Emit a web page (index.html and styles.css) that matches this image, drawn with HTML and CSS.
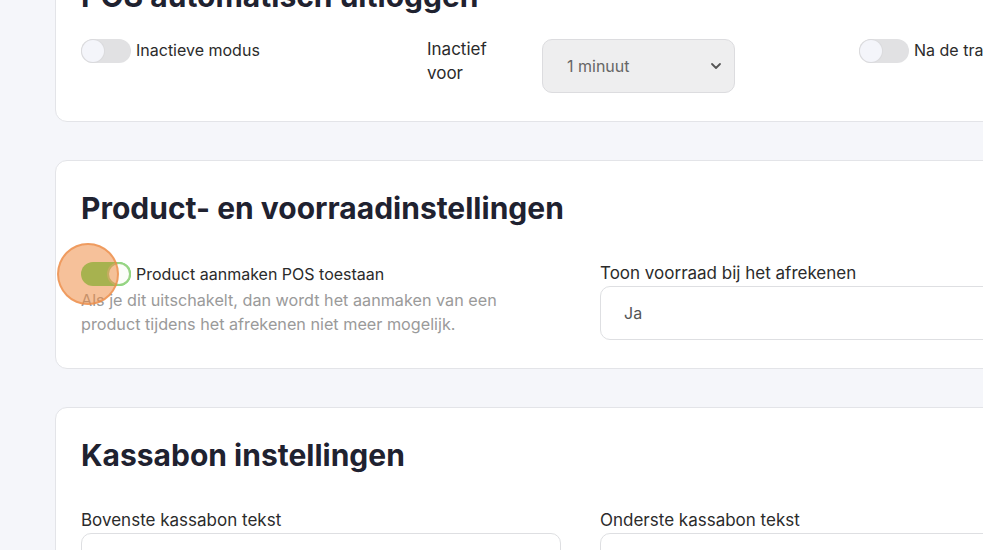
FILE: index.html
```html
<!DOCTYPE html>
<html lang="nl">
<head>
<meta charset="utf-8">
<title>POS instellingen</title>
<link rel="stylesheet" href="styles.css">
</head>
<body>
<main class="settings">
  <section class="card card-logout">
    <h2 class="card-title">POS automatisch uitloggen</h2>
    <div class="logout-row">
      <label class="switch-field">
        <span class="switch"><span class="knob"></span></span>
        <span class="switch-label">Inactieve modus</span>
      </label>
      <div class="inline-field">
        <span class="inline-label">Inactief voor</span>
        <div class="select">
          <span>1 minuut</span>
          <svg class="chevron" width="12" height="8" viewBox="0 0 12 8"><path d="M2 2l4 4 4-4" fill="none" stroke="#555" stroke-width="1.8" stroke-linecap="round" stroke-linejoin="round"/></svg>
        </div>
      </div>
      <label class="switch-field">
        <span class="switch"><span class="knob"></span></span>
        <span class="switch-label">Na de transactie uitloggen</span>
      </label>
    </div>
  </section>

  <section class="card">
    <h2 class="card-title">Product- en voorraadinstellingen</h2>
    <div class="two-col">
      <div class="field">
        <label class="switch-field">
          <span class="switch on"><span class="knob"></span></span>
          <span class="switch-label">Product aanmaken POS toestaan</span>
          <span class="click-marker"></span>
        </label>
        <p class="help">Als je dit uitschakelt, dan wordt het aanmaken van een product tijdens het afrekenen niet meer mogelijk.</p>
      </div>
      <div class="field">
        <span class="field-label">Toon voorraad bij het afrekenen</span>
        <div class="input">Ja</div>
      </div>
    </div>
  </section>

  <section class="card">
    <h2 class="card-title">Kassabon instellingen</h2>
    <div class="two-col">
      <div class="field">
        <span class="field-label">Bovenste kassabon tekst</span>
        <div class="input tall"></div>
      </div>
      <div class="field">
        <span class="field-label">Onderste kassabon tekst</span>
        <div class="input tall"></div>
      </div>
    </div>
  </section>
</main>
</body>
</html>
```

FILE: styles.css
```css
html, body {
  margin: 0;
  height: 100%;
  overflow: hidden;
}

body {
  background: #f5f6fa;
  font-family: Inter, "Noto Sans", sans-serif;
  color: #2b2b2b;
}

.settings {
  display: flex;
  flex-direction: column;
  gap: 38px;
  margin-top: -63px;
  padding-left: 55px;
  width: 1100px;
}

.card {
  background: #fff;
  border: 1px solid #e3e4e8;
  border-radius: 12px;
  padding: 29px 25px 28px;
}

.card-title {
  margin: 0 0 36px;
  font-size: 30px;
  line-height: 36px;
  font-weight: 700;
  color: #1f2230;
}

.card-logout {
  padding-top: 40px;
  padding-bottom: 28px;
}

.card-logout .card-title {
  margin-bottom: 25px;
}

/* switches */
.switch-field {
  position: relative;
  display: flex;
  align-items: center;
  gap: 5px;
  height: 24px;
  white-space: nowrap;
}

.switch {
  position: relative;
  flex: none;
  width: 50px;
  height: 24px;
  border-radius: 12px;
  background: #e1e1e3;
}

.switch .knob {
  position: absolute;
  top: 1px;
  left: 1px;
  width: 22px;
  height: 22px;
  border-radius: 50%;
  background: #f4f5fa;
  box-shadow: 0 0 0 1px #dadadd;
}

.switch.on {
  background: #58e060;
}

.switch.on .knob {
  left: auto;
  right: 0;
  top: 0;
  width: 20px;
  height: 20px;
  background: #fbfdf9;
  border: 2px solid #98d384;
  box-shadow: none;
}

.switch-label {
  font-size: 16px;
  line-height: 24px;
  color: #2b2b2b;
}

.click-marker {
  position: absolute;
  left: -24px;
  top: -19px;
  width: 58px;
  height: 58px;
  border-radius: 50%;
  background: rgba(238, 138, 64, 0.53);
  border: 2px solid rgba(236, 140, 70, 0.7);
}

/* first card row */
.logout-row {
  display: grid;
  grid-template-columns: 346px 432px auto;
  align-items: start;
}

.logout-row .switch-label {
  line-height: 20px;
  padding-bottom: 3px;
}

.inline-field {
  display: flex;
  align-items: flex-start;
  gap: 25px;
}

.inline-label {
  width: 90px;
  margin-top: -2px;
  font-size: 17px;
  line-height: 24px;
  color: #2b2b2b;
}

.select {
  display: flex;
  align-items: center;
  justify-content: space-between;
  box-sizing: border-box;
  width: 193px;
  height: 54px;
  padding: 0 12px 0 24px;
  background: #eeeeef;
  border: 1px solid #dcdcdf;
  border-radius: 10px;
  font-size: 16px;
  color: #666;
}

/* two column forms */
.two-col {
  display: grid;
  grid-template-columns: 480px 480px;
  column-gap: 39px;
}

.field {
  display: flex;
  flex-direction: column;
}

.field-label {
  font-size: 17px;
  line-height: 23px;
  color: #2b2b2b;
  margin-bottom: 1px;
}

.help {
  margin: 2px 0 0;
  max-width: 440px;
  font-size: 16.2px;
  line-height: 24px;
  color: #9a9a9a;
}

.input {
  box-sizing: border-box;
  height: 54px;
  padding: 0 23px;
  display: flex;
  align-items: center;
  border: 1px solid #dedfe2;
  border-radius: 10px;
  background: #fff;
  font-size: 16px;
  color: #555;
}

.input.tall {
  height: 90px;
}
```
